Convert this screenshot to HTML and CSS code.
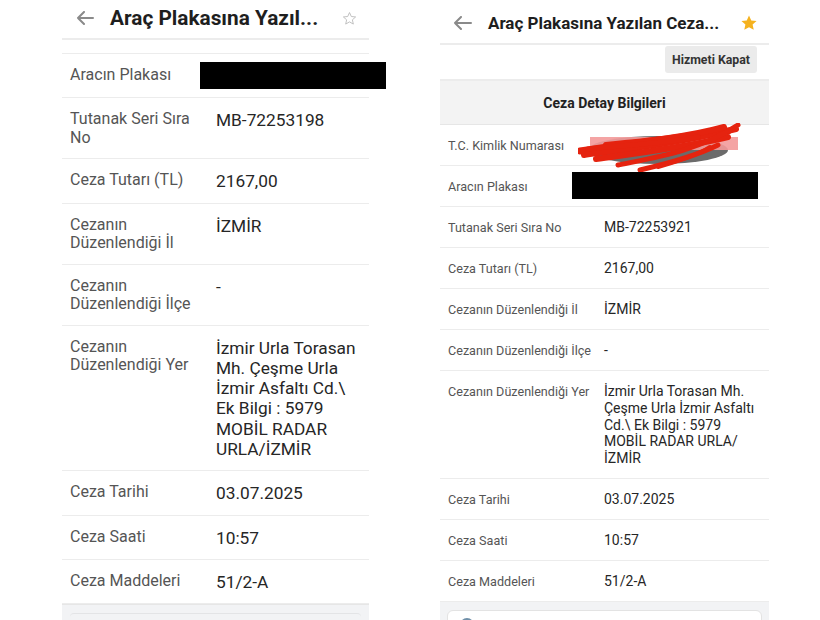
FILE: index.html
```html
<!DOCTYPE html>
<html lang="tr">
<head>
<meta charset="utf-8">
<title>Ceza Detay</title>
<link rel="stylesheet" href="styles.css">
</head>
<body>
<div class="page">
  <section class="panel left">
    <header class="hdr">
      <svg class="back" width="18" height="14" viewBox="0 0 18 14"><path d="M17 7H2M8 1L2 7l6 6" fill="none" stroke="#8a8a8a" stroke-width="2" stroke-linecap="round" stroke-linejoin="round"/></svg>
      <h1 class="title">Araç Plakasına Yazıl...</h1>
      <svg class="star" width="15" height="15" viewBox="0 0 24 24"><path d="M12 2.5l2.9 6.3 6.9.7-5.2 4.6 1.5 6.8L12 17.4l-6.1 3.5 1.5-6.8-5.2-4.6 6.9-.7z" fill="none" stroke="#b8b8b8" stroke-width="1.4" stroke-linejoin="round"/></svg>
    </header>
    <div class="gap"></div>
    <div class="rows">
      <div class="row"><div class="lab">Aracın Plakası</div><div class="val">&nbsp;</div><div class="redact r-left"></div></div>
      <div class="row"><div class="lab">Tutanak Seri Sıra No</div><div class="val">MB-72253198</div></div>
      <div class="row"><div class="lab">Ceza Tutarı (TL)</div><div class="val">2167,00</div></div>
      <div class="row"><div class="lab">Cezanın Düzenlendiği İl</div><div class="val">İZMİR</div></div>
      <div class="row"><div class="lab">Cezanın Düzenlendiği İlçe</div><div class="val">-</div></div>
      <div class="row"><div class="lab">Cezanın Düzenlendiği Yer</div><div class="val">İzmir Urla Torasan Mh. Çeşme Urla İzmir Asfaltı Cd.\ Ek Bilgi : 5979 MOBİL RADAR URLA/İZMİR</div></div>
      <div class="row"><div class="lab">Ceza Tarihi</div><div class="val">03.07.2025</div></div>
      <div class="row"><div class="lab">Ceza Saati</div><div class="val">10:57</div></div>
      <div class="row"><div class="lab">Ceza Maddeleri</div><div class="val">51/2-A</div></div>
    </div>
    <div class="foot"><div class="card"></div></div>
  </section>

  <section class="panel right">
    <header class="hdr">
      <svg class="back" width="19" height="14" viewBox="0 0 19 14"><path d="M18 7H2M8 1L2 7l6 6" fill="none" stroke="#8a8a8a" stroke-width="2" stroke-linecap="round" stroke-linejoin="round"/></svg>
      <h1 class="title">Araç Plakasına Yazılan Ceza...</h1>
      <svg class="star" width="18" height="18" viewBox="0 0 24 24"><path d="M12 2l3 6.5 7.1.8-5.3 4.8 1.5 7L12 17.6 5.7 21.1l1.5-7L1.9 9.3 9 8.5z" fill="#f5b21f"/></svg>
    </header>
    <div class="tools"><button class="btn">Hizmeti Kapat</button></div>
    <div class="sect">Ceza Detay Bilgileri</div>
    <div class="rows">
      <div class="row"><div class="lab">T.C. Kimlik Numarası</div><div class="val">&nbsp;</div>
        <svg class="scribble" width="164" height="50" viewBox="0 0 164 50">
          <ellipse cx="80" cy="27" rx="70" ry="14" fill="#6b6b6b"/>
          <rect x="12" y="14" width="148" height="13" fill="#f39a9a" opacity="0.9"/>
          <g fill="none" stroke="#e5230f" stroke-linecap="round">
            <path d="M2 28C40 22 90 16 150 8" stroke-width="7"/>
            <path d="M6 32C50 26 100 20 158 6" stroke-width="6"/>
            <path d="M18 36C60 30 110 24 150 14" stroke-width="6"/>
            <path d="M40 42C80 34 120 28 160 2" stroke-width="5"/>
            <path d="M62 47C92 40 120 32 140 22" stroke-width="5"/>
            <path d="M28 22C70 18 110 14 146 4" stroke-width="6"/>
            <path d="M80 44C100 38 120 32 132 24" stroke-width="4"/>
            <path d="M10 26C50 22 90 20 120 14" stroke-width="5"/>
          </g>
        </svg>
      </div>
      <div class="row"><div class="lab">Aracın Plakası</div><div class="val">&nbsp;</div><div class="redact r-right"></div></div>
      <div class="row"><div class="lab">Tutanak Seri Sıra No</div><div class="val">MB-72253921</div></div>
      <div class="row"><div class="lab">Ceza Tutarı (TL)</div><div class="val">2167,00</div></div>
      <div class="row"><div class="lab">Cezanın Düzenlendiği İl</div><div class="val">İZMİR</div></div>
      <div class="row"><div class="lab">Cezanın Düzenlendiği İlçe</div><div class="val">-</div></div>
      <div class="row"><div class="lab">Cezanın Düzenlendiği Yer</div><div class="val">İzmir Urla Torasan Mh. Çeşme Urla İzmir Asfaltı Cd.\ Ek Bilgi : 5979 MOBİL RADAR URLA/ İZMİR</div></div>
      <div class="row"><div class="lab">Ceza Tarihi</div><div class="val">03.07.2025</div></div>
      <div class="row"><div class="lab">Ceza Saati</div><div class="val">10:57</div></div>
      <div class="row"><div class="lab">Ceza Maddeleri</div><div class="val">51/2-A</div></div>
    </div>
    <div class="foot"><div class="card"><span class="dot"></span></div></div>
  </section>
</div>
</body>
</html>
```

FILE: styles.css
```css
* { box-sizing: border-box; }
html, body { margin: 0; padding: 0; background: #fff; }
body { width: 820px; height: 620px; overflow: hidden; font-family: Roboto, "Noto Sans", sans-serif; color: #222; }
.page { display: flex; align-items: flex-start; padding-left: 62px; gap: 71px; height: 620px; }
.panel { display: flex; flex-direction: column; height: 620px; }
.panel > * { flex-shrink: 0; }
.left { width: 307px; }
.right { width: 329px; }

.hdr { display: flex; align-items: center; border-bottom: 2px solid #ececec; }
.title { margin: 0; font-weight: 700; white-space: nowrap; color: #1e1e1e; }
.left .hdr { height: 40px; padding: 0 12px 2px 14px; }
.left .back { margin-right: 16px; }
.left .title { font-size: 20.8px; flex: 1; }
.right .hdr { height: 45px; padding: 3px 11px 0 13px; }
.right .back { margin-right: 16px; }
.right .title { font-size: 17px; flex: 1; }

.gap { height: 13px; }

.rows { display: flex; flex-direction: column; border-top: 1px solid #ececec; }
.row { position: relative; display: flex; border-bottom: 1px solid #ececec; padding: 12px 8px; }
.lab { color: #555; flex: none; }
.val { flex: 1; color: #262626; }

.left .row { padding: 12px 8px 11px; }
.left .lab { width: 138px; margin-right: 8px; font-size: 16px; line-height: 18.5px; }
.left .val { font-size: 17.3px; line-height: 20.3px; }

.right .rows { border-top: none; }
.right .row { padding: 12px 8px 11px; }
.right .lab { width: 156px; font-size: 12.6px; line-height: 17px; }
.right .val { font-size: 14px; line-height: 16.8px; }

.redact { position: absolute; background: #000; }
.r-left { left: 138px; top: 8px; width: 186px; height: 27px; }
.r-right { left: 132px; top: 6px; width: 186px; height: 27px; }
.scribble { position: absolute; left: 138px; top: -2px; }

.tools { display: flex; justify-content: flex-end; padding: 1px 12px 6px; border-bottom: 2px solid #ececec; }
.btn { font-family: Roboto, sans-serif; font-weight: 700; font-size: 12.3px; color: #333; background: #ebebeb; border: none; border-radius: 3px; height: 27px; padding: 0 7px; }
.sect { background: #f3f3f3; height: 44px; display: flex; align-items: center; justify-content: center; font-weight: 700; font-size: 14px; color: #222; border-bottom: 1px solid #e6e6e6; }

.foot { flex: 1 1 auto; background: #f2f3f5; min-height: 0; }
.left .foot { padding: 8px 8px 0; border-top: 1px solid #e6e6e6; }
.left .card { height: 20px; border-top: 1px solid #e3e4e6; border-radius: 4px; }
.right .foot { padding: 8px 7px 0; }
.right .card { height: 30px; background: #fff; border: 1px solid #e3e3e3; border-radius: 6px; position: relative; }
.dot { position: absolute; left: 12px; top: 7px; width: 14px; height: 14px; border-radius: 50%; background: #6f8fa8; }
```
